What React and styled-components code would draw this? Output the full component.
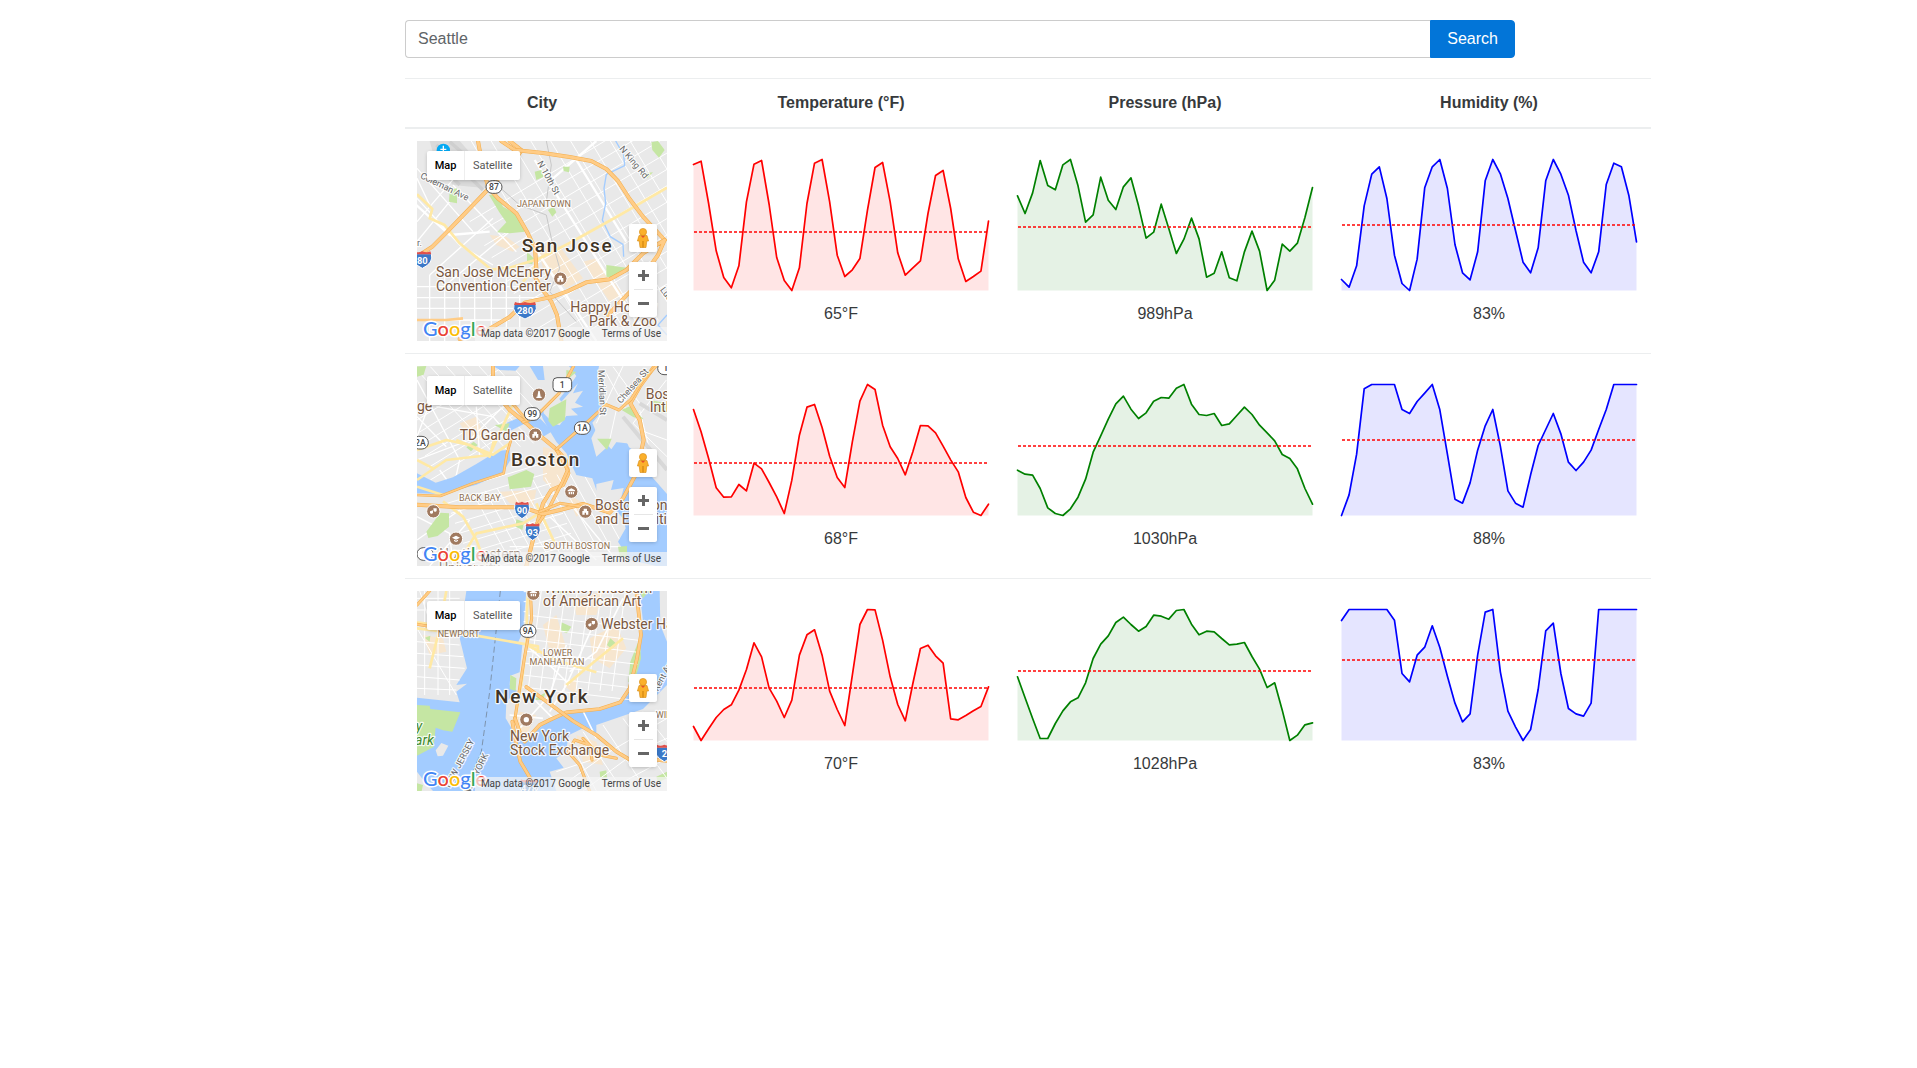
import React, { useState } from "react";
import styled, { createGlobalStyle } from "styled-components";

const GlobalStyle = createGlobalStyle`
  *, *::before, *::after { box-sizing: border-box; }
  body {
    margin: 0;
    padding-left: 3px;
    background: #fff;
    color: #373a3c;
    font: 16px/24px "Liberation Sans", Arial, sans-serif;
  }
`;

const Container = styled.main`
  max-width: 1140px;
  margin: 0 auto;
  padding: 20px 15px;
`;

const SearchForm = styled.form`
  display: flex;
  margin-bottom: 20px;
`;

const SearchInput = styled.input`
  flex: 1;
  min-width: 0;
  height: 38px;
  padding: 6px 12px;
  font: inherit;
  color: #606468;
  background: #fff;
  border: 1px solid #ccc;
  border-right: 0;
  border-radius: 4px 0 0 4px;
  outline: 0;
`;

const SearchButton = styled.button`
  padding: 6px 16px;
  font: inherit;
  color: #fff;
  background: #0275d8;
  border: 1px solid #0275d8;
  border-radius: 0 4px 4px 0;
  cursor: pointer;
`;

const Table = styled.table`
  border-spacing: 0;
  border-collapse: separate;
`;

const Heading = styled.th`
  padding: 12px;
  border-top: 1px solid #eceeef;
  border-bottom: 2px solid #eceeef;
  text-align: center;
`;

const Row = styled.tr`
  & + & > td { border-top: 1px solid #eceeef; }
`;

const Cell = styled.td`
  padding: 12px;
  text-align: center;
  vertical-align: middle;
`;

const ChartSvg = styled.svg`
  display: block;
  width: 300px;
  height: 136px;
  margin: 1px 0 9px;
`;

const Average = styled.div`
  line-height: 24px;
`;

const MapFrame = styled.div`
  position: relative;
  width: 250px;
  height: 200px;
  overflow: hidden;
  font-family: Roboto, sans-serif;
`;

const MapSvg = styled.svg`
  display: block;
  width: 100%;
  height: 100%;
  font-family: Roboto, sans-serif;
`;

const ControlBox = styled.div`
  position: absolute;
  display: flex;
  background: #fff;
  border-radius: 2px;
  box-shadow: 0 1px 4px -1px rgba(0, 0, 0, 0.3);
`;

const TypeControl = styled(ControlBox)`
  top: 10px;
  left: 10px;
  width: 93px;
  height: 29px;
`;

const TypeButton = styled.button`
  flex: 1 1 auto;
  padding: 0 7px;
  border: 0;
  background: none;
  font: ${(p) => (p.$active ? 500 : 400)} 11px/29px Roboto, sans-serif;
  color: ${(p) => (p.$active ? "#000" : "#565656")};
  & + & { border-left: 1px solid #eee; }
`;

const PegmanControl = styled(ControlBox)`
  top: 83px;
  right: 10px;
`;

const ZoomControl = styled(ControlBox)`
  top: 121px;
  right: 10px;
  flex-direction: column;
  align-items: center;
`;

const IconButton = styled.button`
  display: flex;
  align-items: center;
  justify-content: center;
  width: 28px;
  height: ${(p) => p.$height || 27}px;
  padding: 0;
  border: 0;
  background: none;
`;

const Divider = styled.div`
  width: 19px;
  height: 1px;
  background: #e6e6e6;
`;

const Logo = styled.div`
  position: absolute;
  left: 6px;
  bottom: 1px;
  font: 500 20px/24px Lato, sans-serif;
  -webkit-text-stroke: 3px #fff;
  paint-order: stroke;
`;

const LogoLetter = styled.span`
  color: ${(p) => p.$color};
`;

const Attribution = styled.div`
  position: absolute;
  right: 0;
  bottom: 0;
  display: flex;
  gap: 12px;
  padding: 0 6px;
  background: rgba(245, 245, 245, 0.7);
  color: #444;
  font-size: 10px;
  line-height: 14px;
  white-space: nowrap;
`;

const TermsLink = styled.a`
  color: inherit;
  text-decoration: none;
`;

const LOGO = [
  ["G", "#4285f4"], ["o", "#ea4335"], ["o", "#fbbc05"],
  ["g", "#4285f4"], ["l", "#34a853"], ["e", "#ea4335"],
];

/* ---------- map drawing primitives ---------- */

const Highway = ({ d, w = 9 }) => (
  <g fill="none" strokeLinecap="round" strokeLinejoin="round">
    <path d={d} stroke="#f3ad4c" strokeWidth={w + 3} />
    <path d={d} stroke="#ffcc86" strokeWidth={w} />
  </g>
);
const Road = ({ d, w = 8, c = "#ffe9a5" }) => (
  <path d={d} fill="none" stroke={c} strokeWidth={w} strokeLinejoin="round" />
);
const Streets = ({ d, w = 4 }) => <Road d={d} w={w} c="#fff" />;
const Park = ({ d }) => <path d={d} fill="#c5e6a3" />;
const Built = ({ d }) => <path d={d} fill="#f7e6cf" />;
const Water = ({ d }) => <path d={d} fill="#a3ccff" />;
const Land = ({ d }) => <path d={d} fill="#e9e9e9" />;

const Label = ({ x, y, size = 42, color = "#7a5740", weight = 400, anchor, rotate = 0, italic, spacing, children }) => (
  <text
    x={x}
    y={y}
    fontSize={size}
    fontWeight={weight}
    fontStyle={italic ? "italic" : undefined}
    fill={color}
    textAnchor={anchor}
    letterSpacing={spacing}
    stroke="#fff"
    strokeOpacity="0.85"
    strokeWidth="7"
    strokeLinejoin="round"
    style={{ paintOrder: "stroke" }}
    transform={rotate ? `rotate(${rotate} ${x} ${y})` : undefined}
  >
    {children}
  </text>
);

const CityName = (p) => <Label size={57} color="#3f3426" weight={500} spacing={5} {...p} />;
const District = (p) => <Label size={27} color="#8e6f4f" {...p} />;
const StreetName = (p) => <Label size={27} color="#666" {...p} />;

const RouteShield = ({ x, y, w = 48, children }) => (
  <g>
    <rect x={x - w / 2} y={y - 19} width={w} height="38" rx="19" fill="#fff" stroke="#555" strokeWidth="3" />
    <text x={x} y={y + 9} fontSize="26" fontWeight="500" fill="#444" textAnchor="middle">{children}</text>
  </g>
);

const Interstate = ({ x, y, w = 50, children }) => (
  <g transform={`translate(${x} ${y})`}>
    <path d={`M${-w / 2} -16 Q${-w / 2 - 8} 12 0 28 Q${w / 2 + 8} 12 ${w / 2} -16Z`} fill="#3b78c8" stroke="#fff" strokeWidth="3" />
    <path d={`M${-w / 2} -14 L${-w / 2 + 3} -23 Q${-w / 4} -17 0 -23 Q${w / 4} -17 ${w / 2 - 3} -23 L${w / 2} -14Z`} fill="#e0504b" />
    <text y="14" fontSize="28" fontWeight="700" fill="#fff" textAnchor="middle">{children}</text>
  </g>
);

const POI_GLYPHS = {
  hall: "M-9 9V-2H-5V-9H5V-2H9V9ZM-2 9V3H2V9Z",
  tower: "M-2 -11H2L5 6H8V10H-8V6H-5Z",
  museum: "M-11 -4L0 -10L11 -4V-1H-11ZM-8 1H-4V8H-8ZM-2 1H2V8H-2ZM4 1H8V8H4Z",
  dot: "M-8 0A8 8 0 1 0 8 0A8 8 0 1 0 -8 0Z",
  school: "M-12 -3L0 -9L12 -3L0 3ZM-6 3L0 6L6 3V7L0 10L-6 7Z",
  masks: "M-10 0L-1 -3V4A5 5 0 0 1 -10 5ZM0 -9H10V-2A5 5 0 0 1 1 -1Z",
};
const Poi = ({ x, y, glyph }) => (
  <g transform={`translate(${x} ${y})`}>
    <circle r="20" fill="#a07a60" stroke="#fff" strokeWidth="3" />
    <path d={POI_GLYPHS[glyph]} fill="#fff" fillRule="evenodd" />
  </g>
);

// Parallel strokes covering a box, used for the street grids.
const lines = (x0, y0, dx, dy, stepX, stepY, n) =>
  Array.from({ length: n }, (_, i) => `M${x0 + i * stepX} ${y0 + i * stepY}l${dx} ${dy}`).join("");

const SanJoseMap = () => (
  <>
    <Land d="M22 18H772V618H22Z" />
    <path d="M60 18L150 18L240 120L232 160L130 150L80 90Z" fill="#dadada" />
    <path d="M80 30L220 165M120 20L235 120M60 60L150 150" stroke="#cfcfcf" strokeWidth="10" />
    <Built d="M240 300L290 305L330 335L310 350L260 330ZM385 340L440 320L520 430L470 460L400 400ZM520 380L560 370L640 480L600 500Z" />
    <Streets w={3} d={lines(150, -40, 420, 700, 44, -26, 14)} />
    <Streets w={3} d={lines(180, 260, 620, -370, 22, 36, 12)} />
    <Streets w={4} d="M22 260L210 40M22 320L120 200M60 420L250 250M120 440L300 290M22 190L150 330L250 390M22 100L190 290M130 150L320 350M22 130L60 210" />
    <Streets w={4} d="M22 488H400M22 520H330M22 555H300M60 420V618M105 420V618M150 430V618M195 400V560M245 400V618M290 430V618M330 480V618M22 455H340" />
    <Streets w={7} d="M375 75L560 370L700 590M430 130L560 18M500 75L650 320M350 300L560 618M20 210L120 300L240 290" />
    <Park d="M238 180L262 178L280 215L325 240L345 290L300 295L262 292L290 262L268 230Z" />
    <Park d="M725 22L745 18L765 45L748 68L728 45Z" />
    <Park d="M120 165L142 160L142 205L118 200ZM352 350L372 370L368 388L352 385ZM375 110L395 105L402 125L380 135ZM415 225L432 215L440 232L428 245ZM590 390L650 398L620 430L590 425ZM460 95L480 95L478 112L462 108ZM705 115L730 112L712 130Z" />
    <path d="M618 18L642 60L645 92L590 118L583 160L588 205L578 255L602 305L640 328L642 365M772 540L745 570L772 600" fill="none" stroke="#a3ccff" strokeWidth="4" />
    <path d="M240 130L330 210L410 240L425 310L450 400L420 470L500 560M410 18L425 90L410 200" fill="none" stroke="#c8c8c8" strokeWidth="3" />
    <Road d="M22 178L68 222L60 250L105 270L150 325L245 404L300 398L385 372L480 324L620 246L772 158" />
    <Road d="M385 372L370 405L340 440" />
    <Road d="M22 555H110L160 550" c="#ffcc86" />
    <Highway d="M22 365L68 335L110 293L165 236L240 158L300 95L336 46L300 18" />
    <Highway d="M275 18L315 45L400 54L480 66L545 78L590 102L625 138L660 192L700 245L765 315" />
    <Highway d="M205 18L218 90L236 158L265 190L320 235L352 290L376 340L380 400L378 430L400 466L425 500L442 540L455 618" />
    <Highway d="M150 612L225 590L300 546L345 503L430 485L475 468L530 442L600 433L650 405L700 355L765 315L745 360L680 450L595 540" />
    <StreetName x={30} y={128} rotate={26}>Coleman Ave</StreetName>
    <StreetName x={382} y={84} rotate={61}>N 10th St</StreetName>
    <StreetName x={628} y={42} rotate={50}>N King Rd</StreetName>
    <StreetName x={750} y={465} rotate={52}>Lucretia</StreetName>
    <StreetName x={22} y={334}>r.</StreetName>
    <circle cx="101" cy="46" r="20" fill="#03a9f4" />
    <path d="M101 32v22M92 43h18" stroke="#fff" strokeWidth="4" />
    <RouteShield x={253} y={156}>87</RouteShield>
    <Interstate x={38} y={372} w={54}>80</Interstate>
    <Interstate x={346} y={524} w={66}>280</Interstate>
    <District x={322} y={216}>JAPANTOWN</District>
    <CityName x={336} y={350}>San Jose</CityName>
    <Label x={79} y={427}>San Jose McEnery</Label>
    <Label x={79} y={469}>Convention Center</Label>
    <Poi x={452} y={431} glyph="hall" />
    <Label x={482} y={532}>Happy Hollow</Label>
    <Label x={538} y={574}>{"Park & Zoo"}</Label>
  </>
);

const BostonMap = () => (
  <>
    <Land d="M22 18H772V618H22Z" />
    <Built d="M400 260L470 280L480 350L440 400L400 360ZM270 395L380 390L370 440L300 430ZM150 190L200 170L230 240L180 240ZM470 400L540 440L500 470Z" />
    <Streets w={3} d={lines(22, 30, 230, 250, 40, -10, 7) + lines(22, 180, 260, -160, 8, 36, 6)} />
    <Streets w={4} d="M22 60L150 300L130 390M22 300L180 240L290 130M80 140L250 170L300 230M22 170L110 260M200 140L210 290M60 130L22 230M90 330L130 385" />
    <Streets w={3} d={lines(100, 400, 300, -90, 12, 30, 9) + lines(190, 400, 120, 218, 36, -8, 10)} />
    <Streets w={4} d="M22 540L150 450L240 618M60 618L180 480M300 560H640M300 590H640M420 470L560 600M480 430L620 600M22 470L120 520L130 618" />
    <Water d="M478 18L568 18L562 50L580 110L570 185L545 235L560 290L610 245L650 250L690 262L690 340L722 345L772 402V618H740L660 600L625 545L648 505L640 475L600 430L560 390L548 355L500 345L470 280L440 245L420 212L400 178L388 150L430 140L478 80L500 48Z" />
    <Water d="M22 340L78 368L130 352L200 312L265 272L300 270L302 300L280 340L200 374L96 402L22 400Z" />
    <Water d="M292 188L340 168L392 176L428 214L398 232L350 188L300 214Z" />
    <Water d="M250 18L330 18L318 32L270 30ZM360 18L400 18L405 60L385 60Z" />
    <Land d="M398 80L430 92L455 125L505 70L490 100L520 92L496 128L520 140L484 146L505 166L470 168L450 196L430 190L402 160Z" />
    <Land d="M580 18H772V390L722 330L700 290L658 262L640 218L605 268L562 222L548 188L590 140L575 90Z" />
    <Land d="M560 372L612 360L604 390L642 384L630 430L560 430Z" />
    <Streets w={3} d="M590 40L650 150M610 20L690 130M640 18L560 190M770 60L670 190L772 290M690 150L740 350M700 50L640 130M620 150L600 240M690 210L772 240M660 500L740 540" />
    <path d="M640 170L772 330M690 130L772 180" stroke="#d8d8d8" strokeWidth="12" />
    <Park d="M294 352L350 330L374 342L364 380L300 388ZM50 515L92 458L118 460L118 500L84 528L56 534ZM420 145L470 118L466 180L430 200L416 182ZM30 235L50 240L44 268L22 262ZM170 262L192 245L204 255L184 274ZM636 150L662 138L702 178L672 172ZM562 236L606 236L592 270ZM470 30L500 36L470 62ZM700 385L740 395L730 412L705 405ZM255 195L300 190L290 215ZM720 120L772 130V160L730 150Z" />
    <Park d="M20 20L50 18L42 44L22 50ZM320 478L344 486L338 510L318 500ZM625 560L652 558L652 592L630 590Z" />
    <Road d="M22 270L110 240L180 255L240 290L260 215M140 240L250 284L300 250M22 360L110 300L240 285L320 110M22 300L70 325" />
    <Road d="M100 424L160 470L200 540L230 618M140 618L200 520L340 490L420 440M380 430L440 560M22 380L100 405" />
    <Highway d="M250 18L250 90L300 150L350 190L392 228L440 268L468 300L476 340L460 375L425 390L400 430L380 500L350 618" />
    <Highway d="M440 268L474 330L456 370L420 440L380 500" w={7} />
    <Highway d="M22 434L150 442L340 442L400 462L450 450L520 432L600 458L640 415L680 340L702 240L690 180L662 130L690 80L735 18" />
    <Highway d="M22 405L92 408L190 370L282 340L292 280L304 240" w={5} />
    <Highway d="M492 18L448 100L372 176L340 186" w={6} />
    <Highway d="M440 268L520 198L590 134L628 150L664 118L700 60L740 18" w={6} />
    <Highway d="M390 455L450 430L520 440M300 120L350 180" w={6} />
    <Label x={22} y={153}>ge</Label>
    <StreetName x={566} y={30} rotate={88}>Meridian St</StreetName>
    <StreetName x={634} y={132} rotate={-49}>Chelsea St</StreetName>
    <g>
      <rect x="430" y="53" width="56" height="42" rx="12" fill="#fff" stroke="#555" strokeWidth="3" />
      <text x="458" y="84" fontSize="26" fontWeight="500" fill="#444" textAnchor="middle">1</text>
    </g>
    <RouteShield x={368} y={162}>99</RouteShield>
    <RouteShield x={518} y={204}>1A</RouteShield>
    <RouteShield x={32} y={248}>2A</RouteShield>
    <RouteShield x={768} y={25}>1</RouteShield>
    <Poi x={388} y={104} glyph="tower" />
    <Poi x={377} y={224} glyph="hall" />
    <Poi x={485} y={395} glyph="museum" />
    <Poi x={527} y={455} glyph="hall" />
    <Poi x={71} y={454} glyph="masks" />
    <Poi x={139} y={536} glyph="school" />
    <Label x={150} y={239}>TD Garden</Label>
    <CityName x={304} y={317}>Boston</CityName>
    <Label x={708} y={116}>Boston</Label>
    <Label x={720} y={156}>Intl</Label>
    <District x={148} y={423}>BACK BAY</District>
    <Interstate x={337} y={448} w={42}>90</Interstate>
    <Interstate x={369} y={513} w={42}>93</Interstate>
    <Label x={556} y={450}>Boston Con</Label>
    <Label x={556} y={492}>and Exhibition</Label>
    <District x={402} y={567}>SOUTH BOSTON</District>
    <RouteShield x={46} y={582}>9</RouteShield>
    <Label x={88} y={598} color="#9c8a7c">Northeastern</Label>
    <Label x={88} y={640} color="#9c8a7c">University</Label>
  </>
);

const NewYorkMap = () => (
  <>
    <Water d="M22 18H772V618H22Z" />
    <Land d="M22 18H170L158 100L150 160L172 250L140 300L172 296L140 320L150 352L22 338Z" />
    <Land d="M350 18H690L700 110L692 200L668 250L655 330L600 368L470 378L400 420L345 468L318 450L288 400L290 350L322 318L300 300L302 272L330 262L338 180L326 170L340 140Z" />
    <Land d="M772 300L700 372L560 420L560 445L520 430L478 450L468 500L440 520L462 548L420 560L440 618H772Z" />
    <Land d="M750 18H772V170L752 120Z" />
    <Land d="M22 560L45 590L70 618H22ZM95 474L116 482L100 512L84 514L78 496Z" />
    <Built d="M400 120L440 90L470 190L420 200ZM540 160L620 120L650 190L600 250L550 220ZM490 40L580 20L560 90L500 90ZM330 380L380 390L350 450L310 420ZM500 450L560 470L580 540L520 530ZM40 150L100 160L110 200L60 210ZM460 300L500 280L500 330Z" />
    <Park d="M22 360L60 362L62 372L152 382L128 440L100 436L78 428L72 486L22 512Z" />
    <Park d="M455 112L485 125L472 145L455 138ZM602 160L622 178L606 192L592 180ZM302 270L320 280L318 318L300 312ZM662 230L690 160L694 220L672 300L656 290ZM370 345L408 322L400 345ZM430 18L480 18L470 30ZM570 560L590 556L592 578L572 580ZM740 575L772 560V580L745 592ZM22 595L40 600L36 618H22ZM45 158L62 152L60 170ZM688 18L718 18L700 40Z" />
    <Streets w={3} d={lines(352, 20, -10, 0, 0, 30, 4) + lines(395, 18, -40, 300, 36, 0, 8) + lines(350, 90, 340, 40, -2, 36, 7)} />
    <Streets w={3} d="M22 40H150M22 75H160M22 170L150 180M22 205L160 215M22 240L165 250M22 275L150 285M22 310L140 315M45 18V330M85 18V330M120 18V330M22 130L140 330M30 18L70 140" />
    <Streets w={5} d="M360 190L430 250L480 300M560 100L470 300L420 380M350 320L430 400M640 40L560 200L480 260M330 430L420 330L470 180M300 390L400 400M520 378L560 460" />
    <Streets w={3} d="M480 470L560 618M520 440L640 618M580 420L700 600M640 400L772 580M460 600L600 500L772 400M520 618L680 500L772 460M590 618L772 520M700 380L772 470M440 560L560 520" />
    <path d="M272 18L240 320L215 500L165 618" fill="none" stroke="#7d93ad" strokeWidth="3" strokeDasharray="18 10" />
    <Road d="M22 130L200 152L385 184L385 204M355 18L352 80L350 180L336 290L316 400" />
    <Road d="M352 180L440 226L560 262M470 300L530 250L640 160M22 112L130 128M110 18L85 150L60 250" />
    <Highway d="M362 18L366 100L344 220L316 400" w={6} />
    <Highway d="M22 118L90 130M22 60L60 18" w={6} />
    <Highway d="M680 18L694 150L682 220L660 310L632 352L570 372L470 382L420 405L390 420L345 470" w={8} />
    <Highway d="M308 410L318 470L332 530L362 580L372 618M316 400L330 440" w={8} />
    <Highway d="M350 306L420 356L490 408L560 450L620 500L660 524L700 520L772 528" w={8} />
    <Highway d="M547 525L540 480L495 465L475 500L510 540L540 618M520 460L570 510L620 520" w={6} />
    <StreetName x={120} y={610} rotate={-62}>NEW JERSEY</StreetName>
    <StreetName x={178} y={630} rotate={-64}>NEW YORK</StreetName>
    <StreetName x={745} y={320} rotate={-62}>Kent Ave</StreetName>
    <Poi x={371} y={26} glyph="museum" />
    <Label x={404} y={24}>Whitney Museum</Label>
    <Label x={400} y={62}>of American Art</Label>
    <Poi x={546} y={117} glyph="masks" />
    <Label x={574} y={131}>Webster Hall</Label>
    <RouteShield x={355} y={138}>9A</RouteShield>
    <District x={84} y={156}>NEWPORT</District>
    <District x={444} y={213} anchor="middle">LOWER</District>
    <District x={442} y={240} anchor="middle">MANHATTAN</District>
    <District x={738} y={398}>WILLIAMS</District>
    <CityName x={256} y={355}>New York</CityName>
    <Poi x={350} y={404} glyph="dot" />
    <Label x={301} y={468}>New York</Label>
    <Label x={301} y={510}>Stock Exchange</Label>
    <Label x={18} y={438} color="#3f8a2e" italic>y</Label>
    <Label x={16} y={480} color="#3f8a2e" italic>ark</Label>
    <Interstate x={764} y={502} w={50}>2</Interstate>
    <Interstate x={358} y={606} w={54}>478</Interstate>
  </>
);

const MapView = ({ name, children }) => (
  <MapFrame>
    <MapSvg viewBox="22 18 750 600" role="img" aria-label={`Map of ${name}`}>{children}</MapSvg>
    <Logo>
      {LOGO.map(([letter, color], i) => (
        <LogoLetter key={i} $color={color}>{letter}</LogoLetter>
      ))}
    </Logo>
    <Attribution>
      <span>Map data ©2017 Google</span>
      <TermsLink href="#terms">Terms of Use</TermsLink>
    </Attribution>
    <TypeControl>
      <TypeButton type="button" $active>Map</TypeButton>
      <TypeButton type="button">Satellite</TypeButton>
    </TypeControl>
    <PegmanControl>
      <IconButton type="button" $height={28} aria-label="Street View">
        <svg width="14" height="20" viewBox="0 0 14 20">
          <path d="M3 7.5H11L12.6 13H10.8L10 19.5H4L3.2 13H1.4Z" fill="#fbb02c" stroke="#d58a12" strokeWidth="0.6" />
          <path d="M4.6 7.4L7 10L9.4 7.4Z" fill="#e5502c" />
          <circle cx="7" cy="4" r="3.6" fill="#fbb02c" stroke="#d58a12" strokeWidth="0.6" />
          <path d="M7 13V19.5" stroke="#c97c0b" />
        </svg>
      </IconButton>
    </PegmanControl>
    <ZoomControl>
      <IconButton type="button" aria-label="Zoom in">
        <svg width="11" height="11"><path d="M0 5.5H11M5.5 0V11" stroke="#666" strokeWidth="3" /></svg>
      </IconButton>
      <Divider />
      <IconButton type="button" aria-label="Zoom out">
        <svg width="11" height="11"><path d="M0 5.5H11" stroke="#666" strokeWidth="3" /></svg>
      </IconButton>
    </ZoomControl>
  </MapFrame>
);

/* ---------- sparkline ---------- */

// Every series holds forty depths below the plot's ceiling, from TOP to BOTTOM.
const TOP = 43;
const BOTTOM = 436;
const PLOT = { left: 2.5, right: 297.5, top: 2.5, bottom: 133.5 };

const toY = (depth) =>
  PLOT.top + ((depth - TOP) / (BOTTOM - TOP)) * (PLOT.bottom - PLOT.top);

const Chart = ({ series, mean, color, value, label }) => {
  const step = (PLOT.right - PLOT.left) / (series.length - 1);
  const line = series.map((d, i) => `${PLOT.left + i * step},${toY(d)}`).join(" ");
  const meanY = Math.round(toY(mean));
  return (
    <>
      <ChartSvg viewBox="0 0 300 136" role="img" aria-label={label}>
        <polygon
          points={`${PLOT.left},${PLOT.bottom} ${line} ${PLOT.right},${PLOT.bottom}`}
          fill={color}
          fillOpacity="0.1"
        />
        <polyline points={line} fill="none" stroke={color} strokeWidth="1.7" strokeLinejoin="round" strokeLinecap="round" />
        <line
          x1="3"
          x2="297"
          y1={meanY}
          y2={meanY}
          stroke="red"
          strokeOpacity="0.75"
          strokeWidth="2"
          strokeDasharray="3 2"
          shapeRendering="crispEdges"
        />
      </ChartSvg>
      <Average>{value}</Average>
    </>
  );
};

const COLUMNS = [
  { title: "Temperature (°F)", color: "red" },
  { title: "Pressure (hPa)", color: "green" },
  { title: "Humidity (%)", color: "blue" },
];

const CITIES = [
  {
    name: "San Jose",
    Map: SanJoseMap,
    charts: [
      { value: "65°F", mean: 261, series: [58, 48, 175, 317, 397, 428, 362, 170, 57, 46, 178, 337, 406, 436, 368, 175, 54, 43, 170, 330, 394, 374, 340, 195, 67, 52, 170, 323, 390, 368, 347, 205, 91, 76, 190, 341, 409, 394, 378, 228] },
      { value: "989hPa", mean: 246, series: [152, 205, 143, 46, 121, 134, 59, 43, 122, 231, 209, 96, 165, 193, 125, 98, 182, 279, 261, 177, 250, 325, 282, 219, 281, 396, 384, 320, 398, 407, 320, 258, 318, 436, 405, 297, 318, 294, 217, 127] },
      { value: "83%", mean: 240, series: [403, 426, 362, 182, 87, 65, 160, 330, 415, 436, 342, 128, 65, 43, 130, 298, 383, 404, 320, 107, 43, 86, 160, 256, 351, 383, 308, 107, 43, 87, 150, 256, 351, 383, 320, 118, 54, 65, 152, 290] },
    ],
  },
  {
    name: "Boston",
    Map: BostonMap,
    charts: [
      { value: "68°F", mean: 278, series: [118, 185, 265, 353, 381, 380, 343, 362, 279, 296, 337, 380, 430, 330, 195, 111, 103, 172, 258, 322, 352, 215, 93, 43, 58, 165, 230, 265, 314, 245, 166, 167, 188, 228, 269, 305, 382, 426, 436, 402] },
      { value: "1030hPa", mean: 228, series: [300, 312, 315, 355, 413, 430, 436, 416, 381, 327, 246, 197, 147, 101, 78, 117, 145, 128, 93, 82, 84, 54, 43, 102, 133, 136, 130, 166, 161, 136, 111, 133, 165, 188, 212, 253, 265, 296, 355, 402] },
      { value: "88%", mean: 208, series: [436, 374, 252, 56, 43, 43, 43, 43, 118, 130, 94, 69, 43, 119, 252, 387, 399, 338, 240, 167, 118, 228, 362, 399, 411, 314, 226, 178, 130, 191, 276, 301, 276, 240, 178, 118, 43, 43, 43, 43] },
    ],
  },
  {
    name: "New York",
    Map: NewYorkMap,
    charts: [
      { value: "70°F", mean: 277, series: [394, 436, 401, 367, 343, 329, 285, 223, 143, 185, 279, 318, 367, 315, 180, 119, 104, 180, 288, 343, 391, 240, 88, 43, 44, 135, 245, 328, 377, 265, 160, 150, 182, 204, 371, 374, 361, 347, 334, 275] },
      { value: "1028hPa", mean: 227, series: [245, 308, 370, 430, 430, 385, 347, 320, 308, 263, 190, 147, 122, 82, 66, 88, 108, 94, 60, 63, 72, 46, 43, 87, 119, 108, 110, 130, 149, 147, 142, 184, 222, 277, 263, 345, 436, 420, 389, 383] },
      { value: "83%", mean: 195, series: [76, 43, 43, 43, 43, 43, 43, 75, 235, 260, 180, 156, 92, 157, 243, 324, 380, 356, 180, 51, 43, 230, 348, 395, 436, 403, 283, 107, 84, 235, 340, 356, 363, 324, 43, 43, 43, 43, 43, 43] },
    ],
  },
];

export default function App() {
  const [term, setTerm] = useState("Seattle");
  return (
    <>
      <GlobalStyle />
      <Container>
        <SearchForm onSubmit={(e) => e.preventDefault()}>
          <SearchInput
            type="text"
            aria-label="City"
            value={term}
            onChange={(e) => setTerm(e.target.value)}
          />
          <SearchButton type="submit">Search</SearchButton>
        </SearchForm>
        <Table>
          <thead>
            <tr>
              <Heading scope="col">City</Heading>
              {COLUMNS.map((c) => (
                <Heading key={c.title} scope="col">{c.title}</Heading>
              ))}
            </tr>
          </thead>
          <tbody>
            {CITIES.map(({ name, Map, charts }) => (
              <Row key={name}>
                <Cell>
                  <MapView name={name}><Map /></MapView>
                </Cell>
                {charts.map((chart, i) => (
                  <Cell key={COLUMNS[i].title}>
                    <Chart {...chart} color={COLUMNS[i].color} label={`${COLUMNS[i].title}, ${name}`} />
                  </Cell>
                ))}
              </Row>
            ))}
          </tbody>
        </Table>
      </Container>
    </>
  );
}
